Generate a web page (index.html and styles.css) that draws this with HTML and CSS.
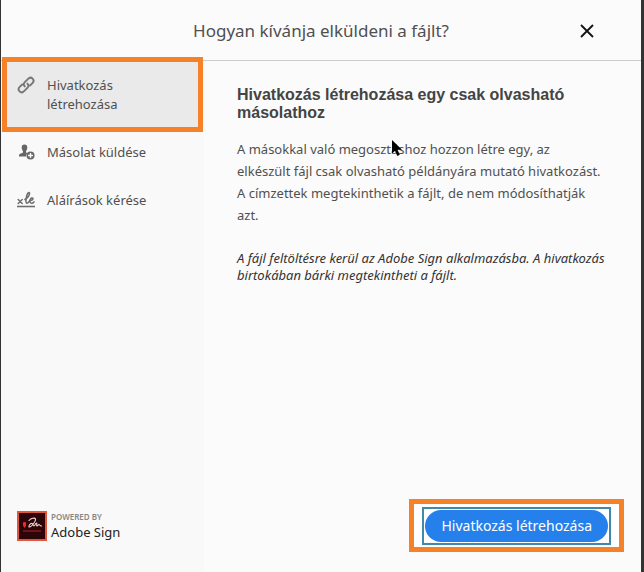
FILE: index.html
```
<!DOCTYPE html>
<html lang="hu">
<head>
    <meta charset="UTF-8">
    <meta name="viewport" content="width=device-width, initial-scale=1.0">
    <title>Hogyan kívánja elküldeni a fájlt?</title>
    <link rel="stylesheet" href="styles.css">
</head>
<body>

    <div class="dialog">
        <header class="dialog-header">
            <h1 class="dialog-title">Hogyan kívánja elküldeni a fájlt?</h1>
            <button class="close" type="button" aria-label="Bezárás">
                <svg width="14" height="14" viewBox="0 0 14 14"><path d="M1 1l12 12M13 1L1 13" fill="none" stroke="#111" stroke-width="1.8"/></svg>
            </button>
        </header>

        <div class="dialog-body">
            <aside class="sidebar">
                <nav class="nav">
                    <button class="nav-item active" type="button">
                        <!-- chain link -->
                        <svg class="nav-icon" viewBox="0 0 18 18" fill="none" stroke="#777" stroke-width="1.9" stroke-linecap="round">
                            <path d="M7.8 10.4C6.500 9.100 6.500 7.400 7.800 6.100l3.300-3.300c1.300-1.300 3.300-1.300 4.500-.1s1.200 3.100-.1 4.400L13 9.500"/>
                            <path d="M10.400 7.600c1.300 1.300 1.300 3 0 4.300l-3.300 3.300c-1.300 1.300-3.300 1.300-4.500.1s-1.200-3.100.1-4.400L5.200 8.500"/>
                        </svg>
                        <span>Hivatkozás létrehozása</span>
                    </button>
                    <button class="nav-item" type="button">
                        <!-- person with a plus badge -->
                        <svg class="nav-icon" viewBox="0 0 18 18">
                            <path d="M7.500 1.500c1.900 0 2.800 1.300 2.800 3.100 0 1.500-.6 2.800-1.300 3.600v1.400c.5.200.9.400 1.300.6-1 1-1.400 2-1.300 3.300H2v-1.300c0-1.400 2.100-1.600 4-2.600V8.200C5.300 7.400 4.700 6.100 4.700 4.600c0-1.800.9-3.100 2.800-3.100z" fill="#666"/>
                            <circle cx="13.500" cy="12.500" r="4" fill="#666"/>
                            <path d="M11 12.500h5M13.500 10v5" stroke="#fafafa" stroke-width="1.400"/>
                        </svg>
                        <span>Másolat küldése</span>
                    </button>
                    <button class="nav-item" type="button">
                        <!-- signature line -->
                        <svg class="nav-icon" viewBox="0 0 18 18" fill="none" stroke="#6e6e6e" stroke-width="1.500" stroke-linecap="round">
                            <path d="M1.200 8.500l4 4M5.200 8.500l-4 4"/>
                            <path d="M8 8.500c2.500-1.500 5-4.500 4.500-6.500-.5-1.300-2 0-2.700 2.500-.8 2.900-1.500 7.700.3 7.700 1.300 0 2-1.700 2.900-3.200M13 9.500c2 0 3.300-1 3-2-.4-1.100-2.300-.6-2.800 1.200-.6 2.100.2 3.500 1.400 3.500 1 0 1.700-.5 2.400-1.300"/>
                            <path d="M0 15.500h18" stroke-width="1.600" stroke-linecap="butt"/>
                        </svg>
                        <span>Aláírások kérése</span>
                    </button>
                </nav>

                <div class="brand">
                    <svg class="brand-logo" width="30" height="30" viewBox="0 0 30 30">
                        <rect x="1" y="1" width="28" height="28" fill="#2b0508" stroke="#e2553b" stroke-width="2"/>
                        <path d="M6 11.500q1.500-1 3 0v3l-1.500 2.500L6 14.500z" fill="#ee2b2b"/>
                        <path d="M6 20h18" stroke="#b3262a"/>
                        <path d="M12 9.500c2-2.500 6-3 6.500-1.500.5 2-4 8-6 8-1.500 0 0-2.500 1.500-3.500 2-1 2 2.500 3 2.500s1.500-3 2.500-3-.5 3 .5 3 1.200-1.500 2-1.500.5 1.500 2.500 1.500" fill="none" stroke="#f3d4d4" stroke-width="1.100" stroke-linecap="round"/>
                    </svg>
                    <div class="brand-text">
                        <span class="brand-small">POWERED BY</span>
                        <span class="brand-name">Adobe Sign</span>
                    </div>
                </div>
            </aside>

            <main class="content">
                <h2 class="content-title">Hivatkozás létrehozása egy csak olvasható másolathoz</h2>
                <p class="description">A másokkal való megosztáshoz hozzon létre egy, az elkészült fájl csak olvasható példányára mutató hivatkozást. A címzettek megtekinthetik a fájlt, de nem módosíthatják azt.</p>
                <p class="note">A fájl feltöltésre kerül az Adobe Sign alkalmazásba. A hivatkozás birtokában bárki megtekintheti a fájlt.</p>
                <div class="actions">
                    <div class="focus-ring">
                        <button class="create" type="button">Hivatkozás létrehozása</button>
                    </div>
                </div>
            </main>
        </div>

        <svg class="cursor" width="12" height="18" viewBox="0 0 12 18"><path d="M1 1v13.500l3-2.800 2.300 5.200 2.500-1.100-2.300-5.100H11z" fill="#000"/></svg>
    </div>

</body>
</html>
```
FILE: styles.css
```
* {
    box-sizing: border-box;
}
body {
    margin: 0;
    background-color: #fbfbfb;
    font-family: "Noto Sans", "Open Sans", sans-serif;
    color: #505050;
}
button {
    border: none;
    background: none;
    font-family: inherit;
    color: inherit;
    cursor: pointer;
}
.dialog {
    position: relative;
    display: flex;
    flex-direction: column;
    min-height: 100vh;
    border-left: 1px solid #333;
    border-right: 3px solid #333;
}

/* Header */
.dialog-header {
    display: grid;
    grid-template-columns: 1fr auto 1fr;
    align-items: center;
    height: 61px;
    padding-top: 2px;
    border-bottom: 1px solid #ccc;
}
.dialog-title {
    grid-column: 2;
    margin: 0;
    font-size: 17px;
    font-weight: 400;
    line-height: 24px;
}
.close {
    display: flex;
    justify-self: end;
    margin-right: 40px;
    padding: 7px;
}

.dialog-body {
    display: flex;
    flex: 1;
}

/* Left column */
.sidebar {
    display: flex;
    flex-direction: column;
    justify-content: space-between;
    flex: 0 0 203px;
    background-color: #f9f9f9;
}
.nav {
    display: flex;
    flex-direction: column;
    padding: 0 5px;
}
.nav-item {
    display: flex;
    gap: 12px;
    padding: 15px 60px 14px 11px;
    font-size: 13px;
    line-height: 19px;
    text-align: left;
}
.nav-item:not(.active) {
    padding-right: 0;
}
.nav-item.active {
    background-color: #eaeaea;
    outline: 5px solid #f58228;
    outline-offset: -1px;
}
.nav-icon {
    flex: none;
    width: 18px;
    height: 18px;
}
.brand {
    display: flex;
    gap: 4px;
    padding: 0 16px 31px;
}
.brand-text {
    display: flex;
    flex-direction: column;
}
.brand-small {
    font-size: 8px;
    font-weight: 600;
    line-height: 12px;
    color: #888;
}
.brand-name {
    font-size: 13px;
    line-height: 18px;
    color: #222;
}

/* Right column */
.content {
    display: flex;
    flex-direction: column;
    flex: 1;
    padding: 25px 17px 20px 33px;
}
.content-title {
    margin: 0 0 16px;
    font-family: "Liberation Sans", Arial, sans-serif;
    font-size: 16px;
    line-height: 18px;
    color: #444;
}
.description {
    max-width: 368px;
    margin: 0 0 24px;
    font-size: 13px;
    line-height: 22px;
}
.note {
    margin: 0;
    font-size: 13px;
    font-style: italic;
    line-height: 17px;
    color: #333;
}
.actions {
    align-self: flex-end;
    margin-top: auto;
    padding: 3px 8px 2px;
    border: 5px solid #f58228;
    background-color: #fff;
}
.focus-ring {
    padding: 1px;
    border: 2px solid #4088ac;
}
.create {
    display: block;
    height: 32px;
    padding: 0 16px;
    border-radius: 16px;
    background-color: #2680eb;
    color: #fff;
    font-size: 14px;
    line-height: 20px;
}

/* Mouse pointer over the text */
.cursor {
    position: absolute;
    top: 139px;
    left: 390px;
}
```
